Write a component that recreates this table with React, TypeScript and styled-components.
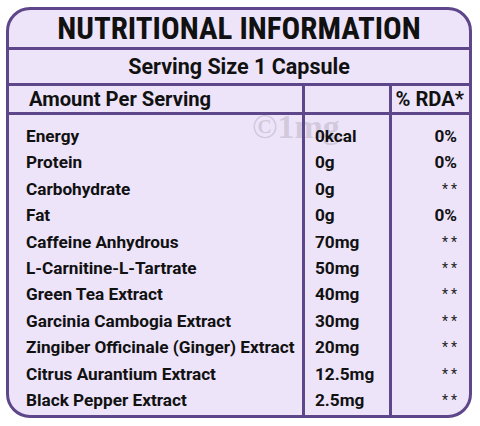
import styled, { createGlobalStyle } from "styled-components";

const Global = createGlobalStyle`
  html, body {
    margin: 0;
    padding: 0;
    background: #ffffff;
  }
  body {
    font-family: Roboto, "Liberation Sans", sans-serif;
    font-stretch: 88%;
    color: #111111;
  }
`;

const Page = styled.div`
  width: 480px;
  height: 426px;
  padding: 7px 8px 8px 6px;
  box-sizing: border-box;
`;

const Panel = styled.div`
  position: relative;
  height: 411px;
  box-sizing: border-box;
  border: 3px solid #5d4689;
  border-radius: 24px;
  background: #ede4f9;
  overflow: hidden;
  display: flex;
  flex-direction: column;
`;

const Title = styled.div`
  position: relative;
  z-index: 1;
  height: 37px;
  display: flex;
  align-items: center;
  justify-content: center;
  font-size: 31px;
  font-weight: 700;
  font-stretch: 80%;
  border-bottom: 3px solid #5d4689;
`;

const Serving = styled.div`
  position: relative;
  z-index: 1;
  height: 33px;
  display: flex;
  align-items: center;
  justify-content: center;
  font-size: 21.5px;
  font-weight: 700;
  font-stretch: 90%;
  border-bottom: 3px solid #5d4689;
`;

const Table = styled.div`
  position: relative;
  z-index: 1;
  flex: 1;
  display: grid;
  grid-template-columns: 296px 87px 1fr;
  grid-template-rows: 29px 1fr;
`;

const Cell = styled.div<{ $head?: boolean; $last?: boolean; $right?: boolean; $pl: number }>`
  box-sizing: border-box;
  min-width: 0;
  border-right: ${({ $last }) => ($last ? "none" : "3px solid #5d4689")};
  border-bottom: ${({ $head }) => ($head ? "3px solid #5d4689" : "none")};
  display: flex;
  flex-direction: column;
  align-items: ${({ $right }) => ($right ? "flex-end" : "flex-start")};
  justify-content: ${({ $head }) => ($head ? "center" : "flex-start")};
  padding-top: ${({ $head }) => ($head ? "0" : "8px")};
  padding-left: ${({ $pl }) => $pl}px;
  padding-right: ${({ $head }) => ($head ? "5px" : "12px")};
`;

const HeadText = styled.span`
  font-size: 20.2px;
  font-weight: 700;
  font-stretch: 88%;
  white-space: nowrap;
`;

const Line = styled.div<{ $stars?: boolean }>`
  height: 26.4px;
  line-height: 26.4px;
  font-size: 17.2px;
  font-weight: 700;
  font-stretch: 88.5%;
  white-space: nowrap;
  ${({ $stars }) =>
    $stars &&
    `font-size: 14px; letter-spacing: 3px; font-weight: 400; color: #222; margin-right: -3px;`}
`;

const Watermark = styled.div`
  position: absolute;
  z-index: 0;
  left: 243px;
  top: 100px;
  font-family: "Liberation Serif", serif;
  font-size: 34px;
  line-height: 1;
  font-weight: 700;
  color: rgba(95, 85, 100, 0.2);
  pointer-events: none;
`;

const rows = [
  ["Energy", "0kcal", "0%"],
  ["Protein", "0g", "0%"],
  ["Carbohydrate", "0g", "**"],
  ["Fat", "0g", "0%"],
  ["Caffeine Anhydrous", "70mg", "**"],
  ["L-Carnitine-L-Tartrate", "50mg", "**"],
  ["Green Tea Extract", "40mg", "**"],
  ["Garcinia Cambogia Extract", "30mg", "**"],
  ["Zingiber Officinale (Ginger) Extract", "20mg", "**"],
  ["Citrus Aurantium Extract", "12.5mg", "**"],
  ["Black Pepper Extract", "2.5mg", "**"],
];

export default function App() {
  return (
    <Page>
      <Global />
      <Panel>
        <Watermark>©1mg</Watermark>
        <Title>NUTRITIONAL INFORMATION</Title>
        <Serving>Serving Size 1 Capsule</Serving>
        <Table>
          <Cell $head $pl={20}>
            <HeadText>Amount Per Serving</HeadText>
          </Cell>
          <Cell $head $pl={10} />
          <Cell $head $last $right $pl={0}>
            <HeadText>% RDA*</HeadText>
          </Cell>
          <Cell $pl={17}>
            {rows.map((r) => (
              <Line key={r[0]}>{r[0]}</Line>
            ))}
          </Cell>
          <Cell $pl={10}>
            {rows.map((r) => (
              <Line key={r[0]}>{r[1]}</Line>
            ))}
          </Cell>
          <Cell $last $right $pl={0}>
            {rows.map((r) => (
              <Line key={r[0]} $stars={r[2] === "**"}>
                {r[2]}
              </Line>
            ))}
          </Cell>
        </Table>
      </Panel>
    </Page>
  );
}
